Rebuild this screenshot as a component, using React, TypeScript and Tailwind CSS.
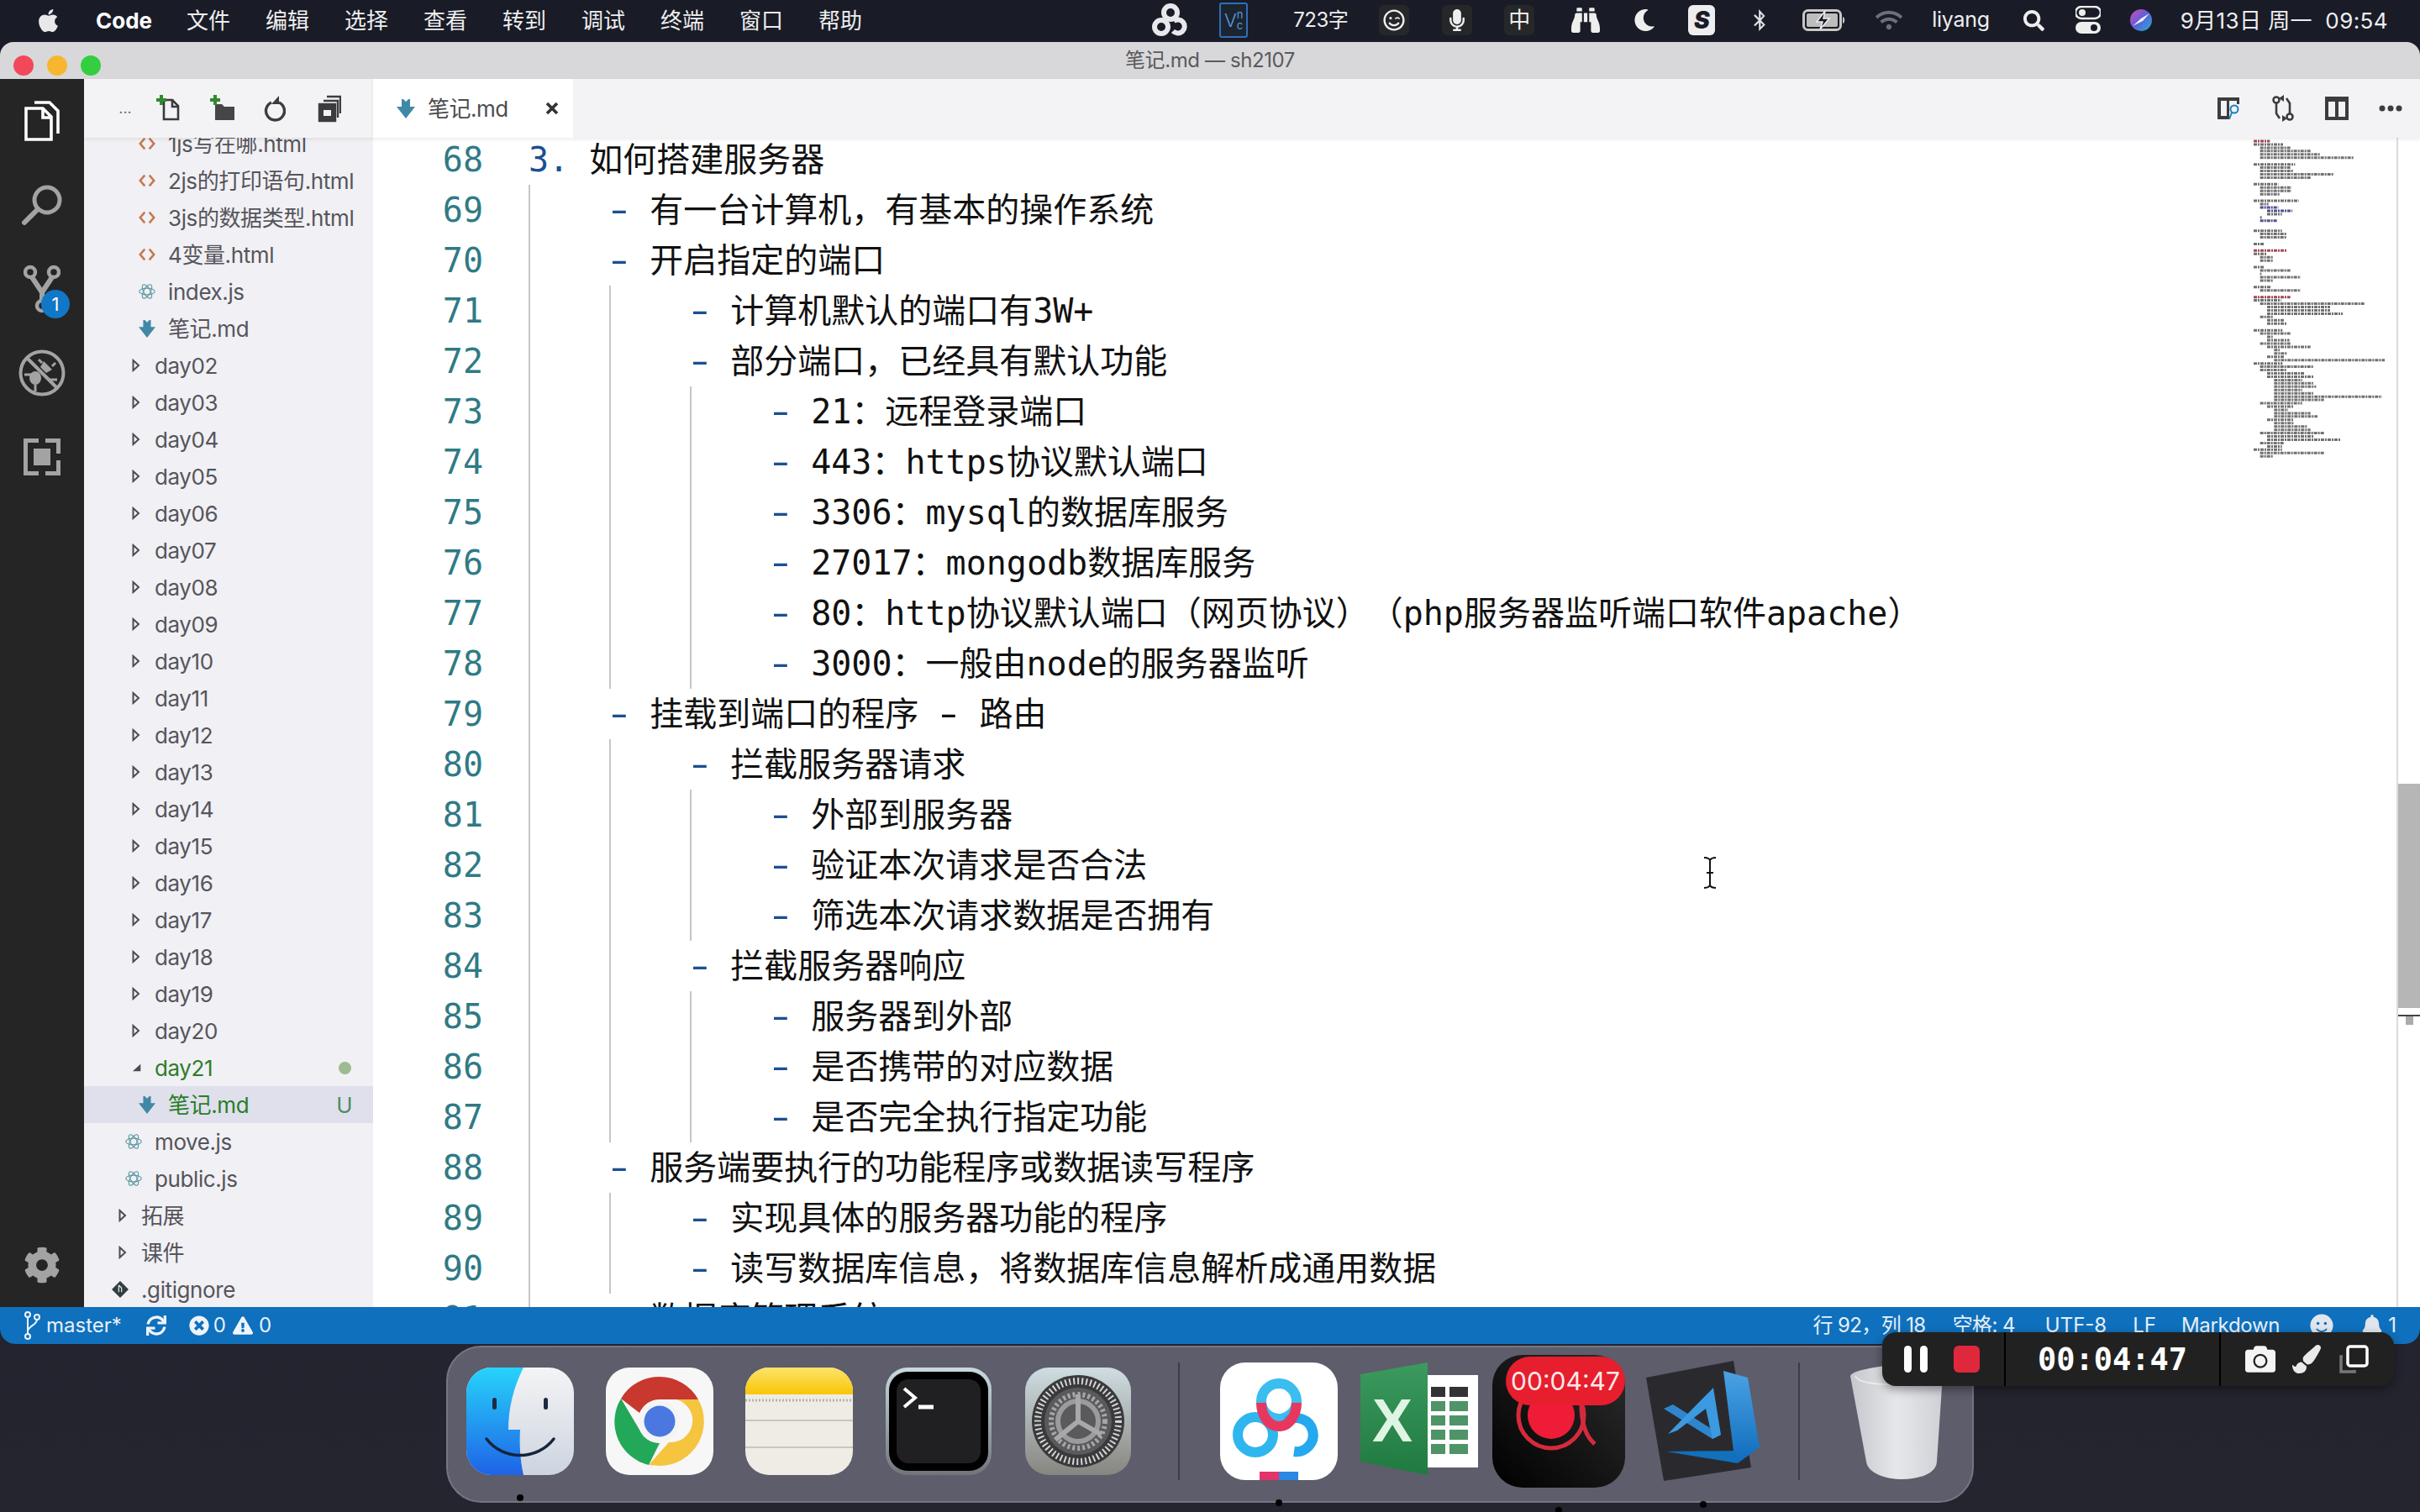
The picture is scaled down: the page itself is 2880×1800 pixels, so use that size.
import React from 'react';
import { FaApple, FaBell, FaBinoculars, FaBluetoothB, FaCamera, FaCog, FaMoon, FaPaintBrush, FaRegSmileWink, FaSmile, FaSync, FaTimesCircle, FaWifi, FaExclamationTriangle, FaMicrophone, FaSearch } from 'react-icons/fa';

const uiFont = "font-['Inter','Noto_Sans_CJK_SC',sans-serif]";
const monoFont = "font-['DejaVu_Sans_Mono','Noto_Sans_CJK_SC',monospace]";

// [line number, indent level, marker, text]
const codeLines: [number, number, string, string][] = [
    [68, 0, '3.', '如何搭建服务器'],
    [69, 1, '-', '有一台计算机，有基本的操作系统'],
    [70, 1, '-', '开启指定的端口'],
    [71, 2, '-', '计算机默认的端口有3W+'],
    [72, 2, '-', '部分端口，已经具有默认功能'],
    [73, 3, '-', '21：远程登录端口'],
    [74, 3, '-', '443：https协议默认端口'],
    [75, 3, '-', '3306：mysql的数据库服务'],
    [76, 3, '-', '27017：mongodb数据库服务'],
    [77, 3, '-', '80：http协议默认端口（网页协议）（php服务器监听端口软件apache）'],
    [78, 3, '-', '3000：一般由node的服务器监听'],
    [79, 1, '-', '挂载到端口的程序 - 路由'],
    [80, 2, '-', '拦截服务器请求'],
    [81, 3, '-', '外部到服务器'],
    [82, 3, '-', '验证本次请求是否合法'],
    [83, 3, '-', '筛选本次请求数据是否拥有'],
    [84, 2, '-', '拦截服务器响应'],
    [85, 3, '-', '服务器到外部'],
    [86, 3, '-', '是否携带的对应数据'],
    [87, 3, '-', '是否完全执行指定功能'],
    [88, 1, '-', '服务端要执行的功能程序或数据读写程序'],
    [89, 2, '-', '实现具体的服务器功能的程序'],
    [90, 2, '-', '读写数据库信息，将数据库信息解析成通用数据'],
    [91, 1, '-', '数据库管理系统'],
];

const days = ['day02', 'day03', 'day04', 'day05', 'day06', 'day07', 'day08', 'day09', 'day10', 'day11', 'day12', 'day13', 'day14', 'day15', 'day16', 'day17', 'day18', 'day19', 'day20'];

// [row, start, end, kind] measured off the minimap
const miniRows: [number, number, number, number][] = [
    [0, 127, 185, 1], [1, 127, 232, 0], [2, 150, 258, 0], [3, 150, 330, 0], [4, 150, 365, 0], [5, 150, 485, 0],
    [7, 127, 275, 0], [8, 150, 258, 0], [9, 150, 270, 0], [10, 150, 412, 0], [11, 150, 330, 0],
    [13, 127, 215, 0], [14, 150, 262, 0], [15, 150, 262, 0], [16, 150, 222, 0],
    [18, 127, 288, 0], [19, 150, 180, 0], [20, 150, 215, 2], [21, 175, 265, 2], [22, 175, 228, 0], [23, 150, 156, 0], [24, 150, 210, 2],
    [27, 127, 228, 0], [28, 150, 245, 0], [29, 150, 245, 0], [31, 127, 165, 0],
    [33, 127, 245, 1], [34, 127, 172, 0], [35, 150, 198, 0], [36, 150, 198, 0],
    [38, 127, 165, 0], [39, 150, 258, 0], [40, 150, 155, 0], [41, 150, 295, 0], [42, 150, 198, 0],
    [44, 127, 190, 0], [45, 150, 295, 0],
    [47, 127, 258, 1], [48, 127, 225, 0], [49, 150, 522, 0], [50, 175, 400, 0], [51, 175, 400, 0], [52, 175, 445, 0], [53, 150, 198, 0], [54, 175, 235, 0], [55, 175, 245, 0],
    [57, 127, 230, 0], [58, 150, 260, 0], [59, 175, 195, 0], [60, 175, 255, 0], [61, 150, 260, 0], [62, 175, 330, 0], [63, 200, 220, 0], [64, 200, 245, 0], [65, 175, 235, 0], [66, 200, 595, 0],
    [67, 127, 230, 0], [68, 150, 340, 0], [69, 150, 245, 0], [70, 175, 310, 0], [71, 175, 340, 0], [72, 200, 300, 0], [73, 200, 340, 0], [74, 200, 350, 0], [75, 200, 300, 0], [76, 200, 340, 0], [77, 200, 585, 0], [78, 200, 378, 0],
    [79, 150, 300, 0], [80, 175, 270, 0], [81, 200, 250, 0], [82, 200, 330, 0], [83, 200, 355, 0], [84, 175, 270, 0], [85, 200, 270, 0], [86, 200, 318, 0], [87, 200, 330, 0],
    [88, 150, 378, 0], [89, 175, 340, 0], [90, 175, 438, 0], [91, 150, 235, 0], [92, 175, 228, 0],
    [93, 127, 228, 0], [94, 150, 378, 0], [95, 150, 198, 0],
];

function HtmlIcon() {
    return (
        <svg width="22" height="20" viewBox="0 0 22 20" fill="none" stroke="#c4794d" strokeWidth="2.800">
            <path d="M8 3 2 10l6 7M14 3l6 7-6 7" />
        </svg>
    );
}

function ReactIcon() {
    return (
        <svg width="26" height="26" viewBox="0 0 26 26" fill="none" stroke="#5d9aa3" strokeWidth="1.500">
            <ellipse cx="13" cy="13" rx="12" ry="5" />
            <ellipse cx="13" cy="13" rx="12" ry="5" transform="rotate(60 13 13)" />
            <ellipse cx="13" cy="13" rx="12" ry="5" transform="rotate(120 13 13)" />
        </svg>
    );
}

function MdIcon() {
    return (
        <svg width="22" height="24" viewBox="0 0 22 24" fill="#3f89a6">
            <path d="M6 1h2l3 3 3-3h2v9h6L11 24 0 10h6z" />
        </svg>
    );
}

function GitIcon() {
    return (
        <svg width="24" height="24" viewBox="0 0 24 24">
            <path d="M12 0 24 12 12 24 0 12z" fill="#2f3e43" />
            <path d="M10 6l4 4v6M10 6v10" stroke="#f1f0f4" strokeWidth="1.400" fill="none" />
        </svg>
    );
}

function Arrow({ open = false }: { open?: boolean }) {
    if (open) {
        return (
            <svg width="14" height="14" viewBox="0 0 14 14" className="ml-[8px]">
                <path d="M12 2v10H1z" fill="#4c4c50" />
            </svg>
        );
    }
    return (
        <svg width="10" height="16" viewBox="0 0 10 16" className="ml-[6px]" fill="none" stroke="#4c4c50" strokeWidth="2">
            <path d="M1.500 2 8 8l-6.500 6z" />
        </svg>
    );
}

function Row({ pad, icon, name, tone = 'text-[#55555b]', selected = false, right }: { pad: string; icon: React.ReactNode; name: string; tone?: string; selected?: boolean; right?: React.ReactNode }) {
    return (
        <div className={`flex h-[44px] shrink-0 items-center ${pad} ${selected ? 'bg-[#dfe0ec]' : ''}`}>
            <div className="mr-[15px] flex h-[20px] w-[20px] shrink-0 items-center justify-center">{icon}</div>
            <span className={`whitespace-nowrap text-[26px] tracking-[-0.4px] ${tone}`}>{name}</span>
            {right && <div className="ml-auto mr-[22px] flex w-[24px] justify-center">{right}</div>}
        </div>
    );
}

function Sidebar() {
    return (
        <div className={`flex w-[344px] shrink-0 flex-col bg-[#f1f0f4] ${uiFont}`}>
            <div className="relative z-10 flex h-[70px] shrink-0 items-center bg-[#f3f3f5] pl-[39px] shadow-[0_2px_4px_rgba(0,0,0,0.08)]">
                <span className="w-[20px] text-center text-[18px] leading-none text-[#6a6a6a]">...</span>
                <svg className="ml-[27px]" width="30" height="32" viewBox="0 0 30 32">
                    <path d="M9 6h10l7 7v16H9z" fill="none" stroke="#3a3a3c" strokeWidth="2.600" />
                    <path d="M19 5v9h8" fill="none" stroke="#3a3a3c" strokeWidth="2.600" />
                    <path d="M0 6h12M6 0v12" stroke="#2e8b2e" strokeWidth="4" />
                </svg>
                <svg className="ml-[34px]" width="30" height="32" viewBox="0 0 30 32">
                    <path d="M6 11h8l3 3h12v16H6z" fill="#464648" />
                    <path d="M0 6h12M6 0v12" stroke="#2e8b2e" strokeWidth="4" />
                </svg>
                <svg className="ml-[34px]" width="26" height="32" viewBox="0 0 26 32" fill="none">
                    <path d="M9 9a11 11 0 1 0 9 0" stroke="#3c3c3e" strokeWidth="3.400" />
                    <path d="M18 1v10h-9z" fill="#3c3c3e" />
                </svg>
                <svg className="ml-[38px]" width="28" height="34" viewBox="0 0 28 34" fill="none" stroke="#3c3c3e" strokeWidth="2.400">
                    <rect x="2" y="12" width="19" height="20" fill="#3c3c3e" />
                    <rect x="7" y="19" width="9" height="7" fill="#f3f3f5" stroke="none" />
                    <path d="M7 8h17v20M11 3h16v20" />
                </svg>
            </div>
            <div className="flex-1 overflow-hidden">
                <div className="-mt-[15px] flex flex-col">
                    <Row pad="pl-[65px]" icon={<HtmlIcon />} name="1js写在哪.html" />
                    <Row pad="pl-[65px]" icon={<HtmlIcon />} name="2js的打印语句.html" />
                    <Row pad="pl-[65px]" icon={<HtmlIcon />} name="3js的数据类型.html" />
                    <Row pad="pl-[65px]" icon={<HtmlIcon />} name="4变量.html" />
                    <Row pad="pl-[65px]" icon={<ReactIcon />} name="index.js" />
                    <Row pad="pl-[65px]" icon={<MdIcon />} name="笔记.md" />
                    {days.map((d) => (
                        <Row key={d} pad="pl-[49px]" icon={<Arrow />} name={d} />
                    ))}
                    <Row pad="pl-[49px]" icon={<Arrow open />} name="day21" tone="text-[#2c7d2a]" right={<div className="h-[15px] w-[15px] rounded-full bg-[#9dbb92]" />} />
                    <Row pad="pl-[65px]" icon={<MdIcon />} name="笔记.md" tone="text-[#2c7d2a]" selected right={<span className="text-[26px] text-[#4d8c62]">U</span>} />
                    <Row pad="pl-[49px]" icon={<ReactIcon />} name="move.js" />
                    <Row pad="pl-[49px]" icon={<ReactIcon />} name="public.js" />
                    <Row pad="pl-[33px]" icon={<Arrow />} name="拓展" />
                    <Row pad="pl-[33px]" icon={<Arrow />} name="课件" />
                    <Row pad="pl-[33px]" icon={<GitIcon />} name=".gitignore" />
                </div>
            </div>
        </div>
    );
}

function ActivityBar() {
    return (
        <div className="flex w-[100px] shrink-0 flex-col items-center bg-[#252526]">
            <div className="flex h-[100px] items-center justify-center">
                <svg width="42" height="50" viewBox="0 0 42 50" fill="none" stroke="#fff" strokeWidth="3.600">
                    <path d="M2 10h20l10 10v27H2z" />
                    <path d="M22 10v11h10" />
                    <path d="M12 3h18l10 10v27" />
                </svg>
            </div>
            <div className="flex h-[100px] items-center justify-center">
                <svg width="50" height="50" viewBox="0 0 50 50" fill="none" stroke="#a3a3a3" strokeWidth="5">
                    <circle cx="31" cy="19" r="15" />
                    <path d="M20 30 4 46" strokeLinecap="round" strokeWidth="6" />
                </svg>
            </div>
            <div className="relative flex h-[100px] w-full items-center justify-center">
                <svg width="44" height="58" viewBox="0 0 44 58" fill="none" stroke="#a3a3a3" strokeWidth="4.500">
                    <circle cx="8" cy="9" r="6" />
                    <circle cx="36" cy="9" r="6" />
                    <circle cx="22" cy="49" r="6" />
                    <path d="M10 15 22 33 34 15M22 33v10" strokeWidth="6" />
                </svg>
                <div className="absolute left-[49px] top-[51px] flex h-[34px] w-[34px] items-center justify-center rounded-full bg-[#1177c7] font-['Inter'] text-[22px] text-white">1</div>
            </div>
            <div className="flex h-[100px] items-center justify-center">
                <svg width="56" height="56" viewBox="0 0 56 56" fill="none" stroke="#a3a3a3">
                    <circle cx="28" cy="28" r="25.500" strokeWidth="4" />
                    <path d="M10 10 46 46" strokeWidth="4" />
                    <ellipse cx="20" cy="34" rx="7" ry="8" fill="#a3a3a3" stroke="none" />
                    <path d="M30 14l10 10-7 4-7-7z" fill="#a3a3a3" stroke="none" />
                    <path d="M7 30h8M20 42v8M36 36h10M24 12l4 4M44 16l-4 4" strokeWidth="3" />
                </svg>
            </div>
            <div className="flex h-[100px] items-center justify-center">
                <svg width="44" height="44" viewBox="0 0 44 44" fill="#a3a3a3">
                    <path d="M0 0h18v5H5v34h13v5H0zM26 0h18v18h-5V5H26zM26 39h13V26h5v18H26z" />
                    <rect x="12" y="12" width="20" height="20" />
                </svg>
            </div>
            <div className="mt-auto mb-[28px]">
                <FaCog size={44} color="#a3a3a3" />
            </div>
        </div>
    );
}

function Minimap() {
    return (
        <svg className="absolute left-[2238px] top-[2px]" width="170" height="390" viewBox="0 0 170 390">
            {miniRows.map(([row, a, b, kind]) => (
                <line
                    key={row}
                    x1={(a - 127) / 3}
                    x2={(b - 127) / 3}
                    y1={row * 3.95 + 2}
                    y2={row * 3.95 + 2}
                    strokeWidth="3"
                    strokeDasharray="4 1 2 1"
                    stroke={kind === 1 ? '#a04a58' : kind === 2 ? '#50508f' : '#707070'}
                />
            ))}
        </svg>
    );
}

// the list dash is wider in the editor font of the picture
function Dash() {
    return <span className="inline-block scale-x-[1.55]">-</span>;
}

function Editor() {
    return (
        <div className={`relative flex-1 overflow-hidden bg-white text-[40px] ${monoFont}`}>
            <div className="-mt-[4px] flex flex-col">
                {codeLines.map(([num, level, marker, text]) => {
                    const parts = text.split(' - ');
                    return (
                        <div key={num} className="flex h-[60px] items-stretch leading-[60px]">
                            <div className="mr-[54px] w-[131px] shrink-0 text-right text-[#2f7a85]">{num}</div>
                            {level > 0 && <div className="w-[96px] shrink-0 border-l-2 border-[#c6c6c6]" />}
                            {level > 1 && <div className="w-[96px] shrink-0 border-l-2 border-[#c6c6c6]" />}
                            {level > 2 && <div className="w-[96px] shrink-0 border-l-2 border-[#c6c6c6]" />}
                            <span className="whitespace-pre text-[#1b4f91]">{marker === '-' ? <Dash /> : marker}</span>
                            <span className="whitespace-pre text-[#111] [text-spacing-trim:space-all]">
                                {' '}
                                {parts[0]}
                                {parts.length > 1 && (
                                    <>
                                        {' '}
                                        <Dash /> {parts[1]}
                                    </>
                                )}
                            </span>
                        </div>
                    );
                })}
            </div>
            <Minimap />
            <div className="absolute right-0 top-0 h-full w-[28px] border-l-2 border-[#dcdcdc]">
                <div className="absolute left-0 top-[769px] h-[267px] w-[28px] bg-[#b6b6b6]" />
                <div className="absolute left-0 top-[1044px] h-[2px] w-[28px] bg-[#444]" />
                <div className="absolute left-[9px] top-[1046px] h-[10px] w-[9px] bg-[#aaa]" />
            </div>
            <svg className="absolute left-[1582px] top-[856px]" width="18" height="38" viewBox="0 0 18 38" fill="none" stroke="#111" strokeWidth="2">
                <path d="M2 1c4 0 6 1 7 3 1-2 3-3 7-3M2 37c4 0 6-1 7-3 1 2 3 3 7 3M9 4v30M5 19h8" />
            </svg>
        </div>
    );
}

function TabBar() {
    return (
        <div className={`relative z-10 flex h-[70px] shrink-0 bg-[#f3f3f5] shadow-[0_2px_4px_rgba(0,0,0,0.08)] ${uiFont}`}>
            <div className="flex w-[238px] items-center bg-white pl-[28px]">
                <MdIcon />
                <span className="ml-[15px] text-[26px] tracking-[-0.5px] text-[#4c4c50]">笔记.md</span>
                <svg className="ml-[44px]" width="16" height="16" viewBox="0 0 16 16" stroke="#333" strokeWidth="3.600">
                    <path d="M2 2l12 12M14 2 2 14" />
                </svg>
            </div>
            <div className="ml-auto flex items-center gap-[34px] pr-[20px]">
                <svg width="30" height="28" viewBox="0 0 30 28" fill="none">
                    <path d="M1 1h26v4H1zM1 1h4v26H1zM1 23h12v4H1zM12 1h3v26h-3zM24 1h3v8h-3z" fill="#3c3c3e" />
                    <circle cx="21" cy="15" r="4.500" stroke="#1a7fc4" strokeWidth="2" />
                    <path d="M18 19l-3 8" stroke="#1a7fc4" strokeWidth="2" />
                </svg>
                <svg width="30" height="32" viewBox="0 0 30 32" fill="none" stroke="#3c3c3e" strokeWidth="2.600">
                    <circle cx="7" cy="6" r="3.500" />
                    <path d="M7 10v12l4 6" />
                    <circle cx="23" cy="26" r="3.500" />
                    <path d="M23 22V10l-4-6" />
                    <path d="M16 0v8l-6-4zM14 24v8l6-4z" fill="#3c3c3e" stroke="none" />
                </svg>
                <svg width="30" height="30" viewBox="0 0 30 30">
                    <path d="M1 1h28v28H1zM5 7v18h8V7zM17 7v18h8V7z" fill="#3c3c3e" fillRule="evenodd" />
                </svg>
                <svg width="30" height="10" viewBox="0 0 30 10" fill="#3c3c3e">
                    <circle cx="5" cy="5" r="3.500" />
                    <circle cx="15" cy="5" r="3.500" />
                    <circle cx="25" cy="5" r="3.500" />
                </svg>
            </div>
        </div>
    );
}

function StatusBar() {
    return (
        <div className={`flex h-[44px] shrink-0 items-center rounded-b-[18px] bg-[#0f70bd] pb-[1px] text-[24px] leading-none text-[#e8f0f8] ${uiFont}`}>
            <svg className="ml-[28px]" width="20" height="34" viewBox="0 0 20 34" fill="none" stroke="#eef4fa" strokeWidth="2">
                <circle cx="5" cy="4" r="3" />
                <circle cx="5" cy="30" r="3" />
                <circle cx="16" cy="7" r="3" />
                <path d="M5 7v20M16 10c0 6-9 7-11 13" />
            </svg>
            <span className="ml-[7px]">master*</span>
            <FaSync className="ml-[29px]" size={24} color="#eef4fa" />
            <FaTimesCircle className="ml-[27px]" size={24} color="#eef4fa" />
            <span className="ml-[5px]">0</span>
            <FaExclamationTriangle className="ml-[8px]" size={24} color="#eef4fa" />
            <span className="ml-[7px]">0</span>
            <div className="ml-auto flex items-center pr-[28px]">
                <span className="tracking-[-0.6px]">行 92，列 18</span>
                <span className="ml-[32px] tracking-[-0.6px]">空格: 4</span>
                <span className="ml-[36px]">UTF-8</span>
                <span className="ml-[31px]">LF</span>
                <span className="ml-[30px] tracking-[-0.3px]">Markdown</span>
                <FaSmile className="ml-[36px]" size={28} color="#dfe6ee" />
                <FaBell className="ml-[33px]" size={26} color="#dfe6ee" />
                <span className="ml-[6px]">1</span>
            </div>
        </div>
    );
}

function MenuBar() {
    const menus = ['文件', '编辑', '选择', '查看', '转到', '调试', '终端', '窗口', '帮助'];
    return (
        <div className={`flex h-[50px] shrink-0 items-center pb-[2px] text-[25px] text-[#eeeeee] ${uiFont}`}>
            <FaApple className="ml-[42px]" size={31} color="#e8e8e8" />
            <span className="ml-[41px] text-[26px] font-bold text-white">Code</span>
            <div className="ml-[41px] flex gap-[42px] text-[26px]">
                {menus.map((m) => (
                    <span key={m} className="w-[52px] whitespace-nowrap">{m}</span>
                ))}
            </div>
            <div className="ml-auto flex items-center pr-[38px]">
                <svg width="44" height="42" viewBox="0 0 44 42" fill="none" stroke="#e8e8ea" strokeWidth="6">
                    <circle cx="22" cy="12" r="8" />
                    <circle cx="11" cy="29" r="8" />
                    <path d="M25 34a8 8 0 1 0 1-12" />
                </svg>
                <div className="ml-[36px] flex h-[42px] w-[34px] items-center justify-center rounded-[3px] border-2 border-[#2f6fb7] bg-[#1c2430] leading-none text-[#5b9bdc]">
                    <span className="text-[22px] font-light">V</span>
                    <span className="flex flex-col text-[13px] leading-[13px]">
                        <span>n</span>
                        <span>c</span>
                    </span>
                </div>
                <span className="ml-[54px] text-[24px] tracking-[-0.5px]">723字</span>
                <div className="ml-[37px] flex h-[36px] w-[36px] items-center justify-center rounded-[6px] bg-[#262728]"><FaRegSmileWink size={26} color="#eeeeee" /></div>
                <div className="ml-[39px] flex h-[36px] w-[36px] items-center justify-center rounded-[6px] bg-[#262728]"><FaMicrophone size={26} color="#eeeeee" /></div>
                <div className="ml-[38px] flex h-[36px] w-[36px] items-center justify-center rounded-[6px] bg-[#262728] text-[26px] leading-none">中</div>
                <FaBinoculars className="ml-[44px]" size={34} color="#eeeeee" />
                <FaMoon className="ml-[40px]" size={26} color="#eeeeee" />
                <div className="ml-[39px] flex h-[36px] w-[32px] items-center justify-center rounded-[6px] bg-[#eeeeee] text-[28px] font-black italic leading-none text-[#1a1c28]">S</div>
                <FaBluetoothB className="ml-[40px]" size={26} color="#e0e0e0" />
                <svg className="ml-[38px]" width="52" height="26" viewBox="0 0 52 26" fill="none">
                    <rect x="1.500" y="1.500" width="44" height="23" rx="5" stroke="#c8c8c8" strokeWidth="3" />
                    <rect x="5" y="5" width="37" height="16" rx="2" fill="#bdbdbd" />
                    <path d="M48 9c3 1 3 7 0 8z" fill="#c8c8c8" />
                    <path d="M27 2 17 15h7l-3 9 11-13h-7z" fill="#1a1c28" stroke="#eee" strokeWidth="1.500" />
                </svg>
                <FaWifi className="ml-[35px]" size={32} color="#6e7076" />
                <span className="ml-[35px] text-[25px] tracking-[-0.3px]">liyang</span>
                <FaSearch className="ml-[40px]" size={25} color="#eeeeee" />
                <svg className="ml-[37px]" width="30" height="34" viewBox="0 0 30 34">
                    <rect x="0" y="1" width="30" height="14" rx="7" fill="none" stroke="#eee" strokeWidth="2.500" />
                    <circle cx="8" cy="8" r="4" fill="#eee" />
                    <rect x="0" y="19" width="30" height="14" rx="7" fill="#eee" />
                    <circle cx="22" cy="26" r="4" fill="#1a1c28" />
                </svg>
                <svg className="ml-[35px]" width="26" height="26" viewBox="0 0 26 26">
                    <defs>
                        <linearGradient id="siri" x1="0" y1="0" x2="1" y2="1">
                            <stop offset="0" stopColor="#d84bb5" />
                            <stop offset="0.5" stopColor="#5a5fd8" />
                            <stop offset="1" stopColor="#22b5d8" />
                        </linearGradient>
                    </defs>
                    <circle cx="13" cy="13" r="13" fill="url(#siri)" />
                    <path d="M3 20 13 11 23 5 15 14z" fill="#eef" />
                </svg>
                <span className="ml-[34px] whitespace-pre text-[26px] tracking-[0.4px]">9月13日 周一  09:54</span>
            </div>
        </div>
    );
}

function Finder() {
    return (
        <svg width="128" height="128" viewBox="0 0 128 128">
            <defs>
                <linearGradient id="fb" x1="0" y1="0" x2="0" y2="1">
                    <stop offset="0" stopColor="#27d3fb" />
                    <stop offset="1" stopColor="#1f63e6" />
                </linearGradient>
                <linearGradient id="fw" x1="0" y1="0" x2="0" y2="1">
                    <stop offset="0" stopColor="#f4f4f5" />
                    <stop offset="1" stopColor="#cdd4e0" />
                </linearGradient>
                <clipPath id="fc"><rect width="128" height="128" rx="30" /></clipPath>
            </defs>
            <g clipPath="url(#fc)">
                <rect width="128" height="128" fill="url(#fw)" />
                <path d="M0 0h68C56 24 50 48 50 74h14c-1 18 0 36 4 54H0z" fill="url(#fb)" />
            </g>
            <rect x="31" y="36" width="5" height="14" rx="2.500" fill="#1c2b44" />
            <rect x="92" y="36" width="5" height="14" rx="2.500" fill="#1c2b44" />
            <path d="M24 85c20 26 60 26 80 0" fill="none" stroke="#16243c" strokeWidth="3.500" strokeLinecap="round" />
        </svg>
    );
}

function Chrome() {
    return (
        <svg width="128" height="128" viewBox="0 0 128 128">
            <rect width="128" height="128" rx="28" fill="#f7f7f7" />
            <path d="M64 11a53 53 0 0 1 46 27H64a26 26 0 0 0-24 16L18 37A53 53 0 0 1 64 11z" fill="#c8382f" />
            <path d="M18 37l22 37a26 26 0 0 0 24 16L51 116A53 53 0 0 1 18 37z" fill="#22a858" />
            <path d="M110 38a53 53 0 0 1-46 79l-13-1 24-27a26 26 0 0 0 9-51z" fill="#f5c53f" />
            <circle cx="64" cy="64" r="24" fill="#f4f4f4" />
            <circle cx="64" cy="64" r="18.500" fill="#4a78e0" />
        </svg>
    );
}

function Notes() {
    return (
        <svg width="128" height="128" viewBox="0 0 128 128">
            <defs>
                <linearGradient id="ny" x1="0" y1="0" x2="0" y2="1">
                    <stop offset="0" stopColor="#fde36a" />
                    <stop offset="1" stopColor="#f8c606" />
                </linearGradient>
                <clipPath id="nc"><rect width="128" height="128" rx="28" /></clipPath>
            </defs>
            <g clipPath="url(#nc)">
                <rect width="128" height="128" fill="#efece6" />
                <rect width="128" height="32" fill="url(#ny)" />
                <path d="M0 39h128" stroke="#b5b2aa" strokeWidth="3" strokeDasharray="2 2" />
                <path d="M0 63h128M0 95h128" stroke="#c9c6be" strokeWidth="2" />
            </g>
        </svg>
    );
}

function Terminal() {
    return (
        <svg width="126" height="128" viewBox="0 0 126 128">
            <defs>
                <linearGradient id="tb" x1="0" y1="0" x2="0" y2="1">
                    <stop offset="0" stopColor="#c9d9de" />
                    <stop offset="1" stopColor="#70757a" />
                </linearGradient>
            </defs>
            <rect width="126" height="128" rx="26" fill="url(#tb)" />
            <rect x="4" y="5" width="118" height="118" rx="22" fill="#000" />
            <rect x="13" y="14" width="100" height="100" rx="14" fill="#201f21" />
            <path d="M22 25l13 11-13 11" fill="none" stroke="#fff" strokeWidth="4" />
            <path d="M39 47h18" stroke="#fff" strokeWidth="5" />
        </svg>
    );
}

function Prefs() {
    return (
        <svg width="126" height="128" viewBox="0 0 126 128">
            <defs>
                <linearGradient id="pb" x1="0" y1="0" x2="0" y2="1">
                    <stop offset="0" stopColor="#cfdde2" />
                    <stop offset="1" stopColor="#87857f" />
                </linearGradient>
            </defs>
            <rect width="126" height="128" rx="28" fill="url(#pb)" />
            <circle cx="63" cy="64" r="55" fill="#3a3a3c" />
            <circle cx="63" cy="64" r="48" fill="none" stroke="#d4d4d4" strokeWidth="8" strokeDasharray="2 3" />
            <circle cx="63" cy="64" r="40" fill="#5a5a5c" />
            <circle cx="63" cy="64" r="32" fill="none" stroke="#a6a6a8" strokeWidth="6" strokeDasharray="3 3" />
            <circle cx="63" cy="64" r="24" fill="none" stroke="#9b9b9d" strokeWidth="6" />
            <path d="M63 64V32M63 64 91 80M63 64 36 86" stroke="#a8a8aa" strokeWidth="6" />
        </svg>
    );
}

function Baidu() {
    return (
        <svg width="140" height="140" viewBox="0 0 140 140">
            <defs>
                <clipPath id="bc"><rect width="140" height="140" rx="30" /></clipPath>
            </defs>
            <g clipPath="url(#bc)">
                <rect width="140" height="140" fill="#fff" />
                <rect x="47" y="130" width="23" height="10" fill="#e2336b" />
                <rect x="70" y="130" width="23" height="10" fill="#2b87e4" />
            </g>
            <g fill="none" strokeWidth="12">
                <circle cx="70" cy="46" r="21" stroke="#3cbdf0" />
                <circle cx="42" cy="86" r="21" stroke="#2fb6ee" />
                <path d="M88 106a20 20 0 1 0 -9-36" stroke="#24a9ee" />
                <path d="M49 48c0 14 8 28 21 28s21-14 21-28" stroke="#e8375f" />
            </g>
        </svg>
    );
}

function Excel() {
    return (
        <svg width="140" height="140" viewBox="0 0 140 140">
            <defs>
                <linearGradient id="eg" x1="0" y1="0" x2="0" y2="1">
                    <stop offset="0" stopColor="#3c9a5e" />
                    <stop offset="1" stopColor="#1f7a3f" />
                </linearGradient>
            </defs>
            <rect x="80" y="15" width="60" height="110" fill="#fff" />
            <path d="M84 29h17v12H84zM106 29h22v12h-22z" fill="#333" />
            <path d="M84 46h17v12H84zM106 46h22v12h-22zM84 63h17v12H84zM106 63h22v12h-22zM84 80h17v12H84zM106 80h22v12h-22zM84 97h17v12H84zM106 97h22v12h-22z" fill="#4e9467" />
            <path d="M0 14 80 0v134L0 118z" fill="url(#eg)" />
            <text x="38" y="94" textAnchor="middle" fontFamily="Liberation Sans" fontWeight="700" fontSize="72" fill="#dff5e4">X</text>
        </svg>
    );
}

function Recorder() {
    return (
        <svg width="158" height="158" viewBox="0 0 158 158">
            <defs>
                <linearGradient id="rb" x1="0" y1="1" x2="1" y2="0">
                    <stop offset="0" stopColor="#000" />
                    <stop offset="1" stopColor="#2c2c2e" />
                </linearGradient>
            </defs>
            <rect width="158" height="158" rx="36" fill="url(#rb)" />
            <circle cx="70" cy="72" r="39" fill="none" stroke="#d62a3c" strokeWidth="5" />
            <circle cx="70" cy="72" r="28" fill="#ee1c36" />
            <path d="M106 60c0 20 4 36 16 46" fill="none" stroke="#d62a3c" strokeWidth="5" />
            <rect x="16" y="2" width="142" height="58" rx="29" fill="#e61e2e" />
            <text x="87" y="42" textAnchor="middle" fontFamily="Inter" fontSize="30" fill="#fbe9ea">00:04:47</text>
        </svg>
    );
}

function VsCode() {
    return (
        <svg width="136" height="144" viewBox="0 0 136 144">
            <defs>
                <linearGradient id="vb" x1="0" y1="0" x2="0" y2="1">
                    <stop offset="0" stopColor="#4ba3e3" />
                    <stop offset="1" stopColor="#0f6cbd" />
                </linearGradient>
            </defs>
            <path d="M0 20 104 0l21 127-104 16z" fill="#2a2a2e" />
            <path d="M92 12l29 8 14 83-26 19-5-15z" fill="url(#vb)" />
            <path d="M24 108l81-1 4 15z" fill="#1270bc" />
            <path d="M21 57l11-5 57 36-10 5z" fill="#2f86cf" />
            <path d="M26 87 80 32l9 56-10 5-8-36-34 26z" fill="#3b9ae0" />
        </svg>
    );
}

function Trash() {
    return (
        <svg width="111" height="140" viewBox="0 0 111 140">
            <defs>
                <linearGradient id="gb" x1="0" y1="0" x2="1" y2="0">
                    <stop offset="0" stopColor="#c4c7cc" />
                    <stop offset="0.5" stopColor="#e6e7ea" />
                    <stop offset="1" stopColor="#cdd0d5" />
                </linearGradient>
            </defs>
            <path d="M0 16C4 6 70 0 111 0l-8 118c-1 28-80 28-84 0z" fill="url(#gb)" />
            <path d="M6 16c4 10 40 14 100 6" stroke="#ffffff" strokeWidth="2" fill="none" opacity="0.6" />
        </svg>
    );
}

function DockItem({ ml, dot = false, icon }: { ml: string; dot?: boolean; icon: React.ReactNode }) {
    return (
        <div className={`relative shrink-0 ${ml}`}>
            {icon}
            {dot && <div className="absolute bottom-[-31px] left-1/2 h-[8px] w-[8px] -translate-x-1/2 rounded-full bg-black" />}
        </div>
    );
}

function Dock() {
    return (
        <div className="mt-[2px] flex h-[187px] shrink-0 justify-center">
            <div className="flex w-[1818px] items-center rounded-[42px] border-2 border-[#757583] bg-[#5d5d6b] pb-[8px]">
                <DockItem ml="ml-[22px]" dot icon={<Finder />} />
                <DockItem ml="ml-[38px]" icon={<Chrome />} />
                <DockItem ml="ml-[38px]" icon={<Notes />} />
                <DockItem ml="ml-[39px]" icon={<Terminal />} />
                <DockItem ml="ml-[40px]" icon={<Prefs />} />
                <div className="ml-[56px] h-[140px] w-[2px] shrink-0 bg-[#3d3d47]" />
                <DockItem ml="ml-[48px]" dot icon={<Baidu />} />
                <DockItem ml="ml-[27px]" icon={<Excel />} />
                <DockItem ml="ml-[17px]" dot icon={<Recorder />} />
                <DockItem ml="ml-[25px]" dot icon={<VsCode />} />
                <div className="ml-[45px] h-[140px] w-[2px] shrink-0 bg-[#3d3d47]" />
                <DockItem ml="ml-[60px]" icon={<Trash />} />
            </div>
        </div>
    );
}

function RecorderBar() {
    return (
        <div className="absolute left-[2240px] top-[1586px] z-20 flex h-[64px] w-[609px] items-center rounded-[16px] bg-[#212121] shadow-[0_4px_12px_rgba(0,0,0,0.4)]">
            <div className="flex h-full w-[147px] items-center border-r-2 border-black pl-[26px]">
                <div className="h-[32px] w-[9px] rounded-full bg-white" />
                <div className="ml-[10px] h-[32px] w-[9px] rounded-full bg-white" />
                <div className="ml-[31px] h-[32px] w-[31px] rounded-[6px] bg-[#e0283c]" />
            </div>
            <div className="flex h-full w-[256px] items-center justify-center border-r-2 border-black font-['DejaVu_Sans_Mono',monospace] text-[37px] font-bold leading-none text-white">
                00:04:47
            </div>
            <div className="flex items-center pl-[29px]">
                <FaCamera size={36} color="#f4f4f4" />
                <FaPaintBrush className="ml-[20px]" size={34} color="#eaeaea" />
                <svg className="ml-[22px]" width="36" height="34" viewBox="0 0 36 34" fill="none">
                    <path d="M4 14h-2v18h16v-2" stroke="#777" strokeWidth="3.500" />
                    <rect x="10" y="2" width="23" height="23" rx="3" stroke="#fff" strokeWidth="3.500" />
                </svg>
            </div>
        </div>
    );
}

export default function App() {
    return (
        <div className={`relative flex h-[1800px] w-[2880px] flex-col overflow-hidden bg-gradient-to-b from-[#191b27] to-[#24252f] ${uiFont}`}>
            <MenuBar />
            <div className="flex h-[1550px] shrink-0 flex-col overflow-hidden rounded-b-[18px] rounded-t-[16px]">
                <div className="grid h-[44px] shrink-0 grid-cols-[1fr_auto_1fr] bg-[#d8d8da]">
                    <div className="flex gap-[16px] pl-[16px] pt-[16px]">
                        <div className="h-[24px] w-[24px] rounded-full bg-[#f2495a]" />
                        <div className="h-[24px] w-[24px] rounded-full bg-[#f6b72e]" />
                        <div className="h-[24px] w-[24px] rounded-full bg-[#33cf41]" />
                    </div>
                    <div className="self-center text-[24px] leading-none tracking-[-0.4px] text-[#5a5a5c]">笔记.md — sh2107</div>
                </div>
                <div className="flex min-h-0 flex-1">
                    <ActivityBar />
                    <Sidebar />
                    <div className="flex min-w-0 flex-1 flex-col">
                        <TabBar />
                        <Editor />
                    </div>
                </div>
                <StatusBar />
            </div>
            <Dock />
            <RecorderBar />
        </div>
    );
}
